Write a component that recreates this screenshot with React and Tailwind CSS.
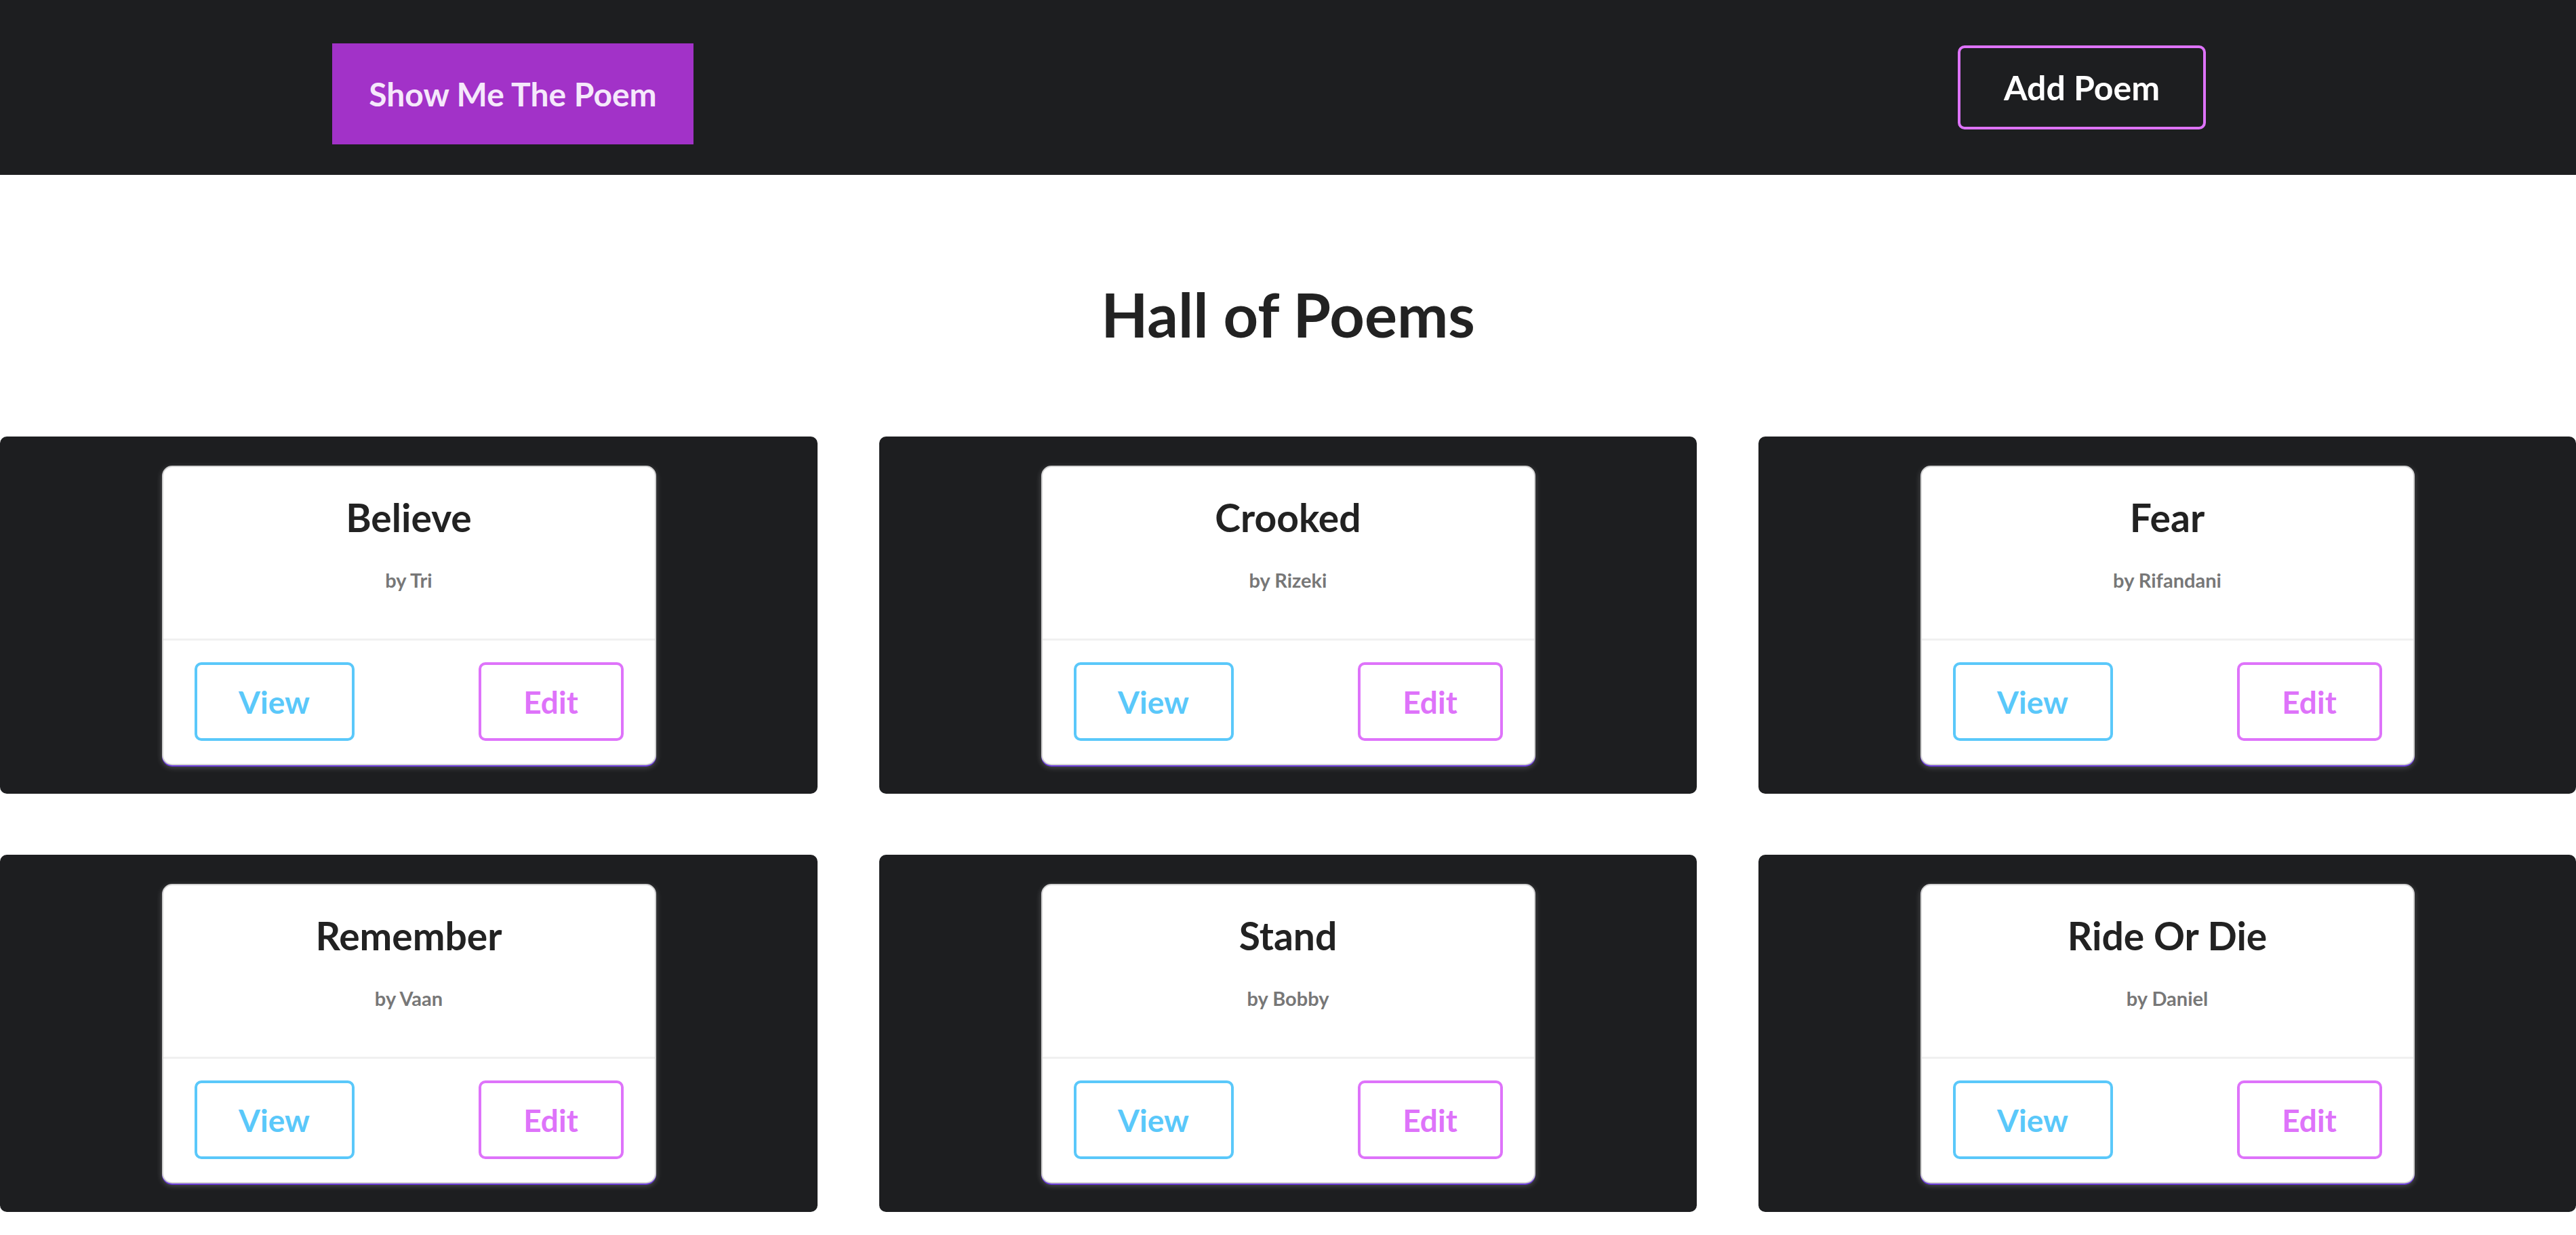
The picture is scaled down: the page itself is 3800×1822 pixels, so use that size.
import React from "react";

const poems = [
  { title: "Believe", author: "Tri" },
  { title: "Crooked", author: "Rizeki" },
  { title: "Fear", author: "Rifandani" },
  { title: "Remember", author: "Vaan" },
  { title: "Stand", author: "Bobby" },
  { title: "Ride Or Die", author: "Daniel" },
];

function PoemCard({ poem }) {
  return (
    <div className="flex h-[527px] justify-center rounded-[10px] bg-[#1d1e20] pt-[43px]">
      <div className="flex h-[442px] w-[729px] flex-col rounded-[15px] border-2 border-[#d4d4d4] bg-white shadow-[0_2px_0_#6a3bd9,0_3px_8px_rgba(255,255,255,0.25)]">
        <div className="flex h-[253px] flex-col items-center pt-[46px]">
          <h2 className="text-[57px] font-bold leading-none text-[#222]">{poem.title}</h2>
          <p className="mt-[49px] text-[29px] font-bold leading-none text-[#777]">by {poem.author}</p>
        </div>
        <div className="h-[3px] bg-[#f0f0f0]" />
        <div className="flex flex-1 items-start justify-between px-[46px] pt-[32px]">
          <button className="flex h-[116px] w-[236px] items-center justify-center rounded-[10px] border-4 border-[#5ac8fa] text-[46px] font-bold text-[#5ac8fa]">
            View
          </button>
          <button className="flex h-[116px] w-[214px] items-center justify-center rounded-[10px] border-4 border-[#de73fa] text-[46px] font-bold text-[#de73fa]">
            Edit
          </button>
        </div>
      </div>
    </div>
  );
}

export default function App() {
  return (
    <div className="min-h-screen bg-white font-['Lato','Liberation_Sans',sans-serif]">
      <header className="flex h-[258px] items-start bg-[#1d1e20]">
        <button className="ml-[490px] mt-[64px] flex h-[149px] w-[533px] items-center justify-center bg-[#a232c8] text-[48px] font-bold text-[#f5e8fb]">
          Show Me The Poem
        </button>
        <button className="ml-[1865px] mt-[67px] flex h-[124px] w-[366px] items-center justify-center rounded-[10px] border-4 border-[#de73fa] text-[50px] font-bold text-white">
          Add Poem
        </button>
      </header>

      <h1 className="mt-[160px] text-center text-[90px] font-bold leading-none text-[#222]">Hall of Poems</h1>

      <main className="mt-[136px] grid grid-cols-3 gap-x-[91px] gap-y-[90px]">
        {poems.map((p) => (
          <PoemCard key={p.title} poem={p} />
        ))}
      </main>
    </div>
  );
}
